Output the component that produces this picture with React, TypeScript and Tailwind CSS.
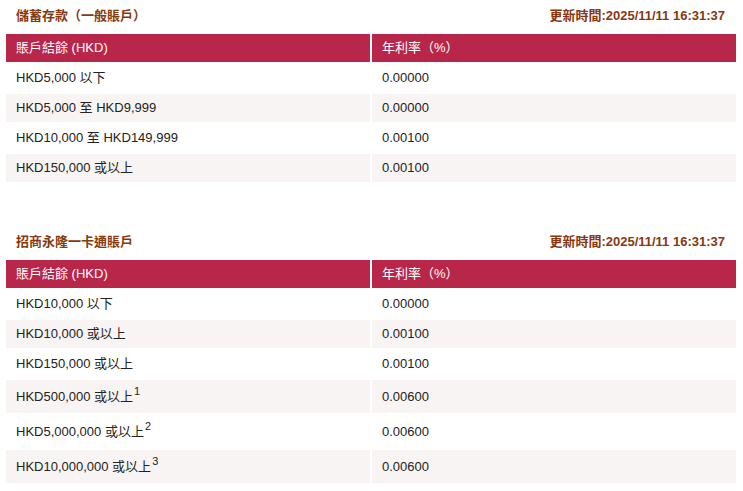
import React from 'react';

type Row = { range: string; note?: string; rate: string };

const savings: Row[] = [
  { range: 'HKD5,000 以下', rate: '0.00000' },
  { range: 'HKD5,000 至 HKD9,999', rate: '0.00000' },
  { range: 'HKD10,000 至 HKD149,999', rate: '0.00100' },
  { range: 'HKD150,000 或以上', rate: '0.00100' },
];

const allInOne: Row[] = [
  { range: 'HKD10,000 以下', rate: '0.00000' },
  { range: 'HKD10,000 或以上', rate: '0.00100' },
  { range: 'HKD150,000 或以上', rate: '0.00100' },
  { range: 'HKD500,000 或以上', note: '1', rate: '0.00600' },
  { range: 'HKD5,000,000 或以上', note: '2', rate: '0.00600' },
  { range: 'HKD10,000,000 或以上', note: '3', rate: '0.00600' },
];

const RateTable: React.FC<{ title: string; rows: Row[]; className?: string }> = ({ title, rows, className = '' }) => (
  <section className={className}>
    <div className="flex h-8 items-center justify-between pl-3 pr-[14px] text-[13px] font-bold text-[#86390f]">
      <span>{title}</span>
      <span>更新時間:2025/11/11 16:31:37</span>
    </div>
    <table className="w-[734px] border-separate border-spacing-[2px] text-[13px] text-[#222]">
      <thead>
        <tr className="bg-[#b8264a] text-white">
          <th className="h-[28px] w-1/2 px-[10px] text-left font-normal">賬戶結餘 (HKD)</th>
          <th className="h-[28px] w-1/2 px-[10px] text-left font-normal">年利率（%）</th>
        </tr>
      </thead>
      <tbody>
        {rows.map((r, i) => (
          <tr key={r.range} className={i % 2 === 1 ? 'bg-[#f8f4f3]' : 'bg-white'}>
            <td className={`${r.note ? 'h-[33px]' : 'h-[28px]'} px-[10px] align-middle`}>
              {r.range}
              {r.note && <span className="relative -top-[6px] ml-[1px] text-[11px]">{r.note}</span>}
            </td>
            <td className={`${r.note ? 'h-[33px]' : 'h-[28px]'} px-[10px] align-middle`}>{r.rate}</td>
          </tr>
        ))}
      </tbody>
    </table>
  </section>
);

export default function App() {
  return (
    <div
      className="w-[743px] bg-white px-1"
      style={{ fontFamily: '"Liberation Sans", Arial, "Noto Sans CJK TC", sans-serif' }}
    >
      <RateTable title="儲蓄存款（一般賬戶）" rows={savings} />
      <RateTable title="招商永隆一卡通賬戶" rows={allInOne} className="mt-[42px]" />
    </div>
  );
}
